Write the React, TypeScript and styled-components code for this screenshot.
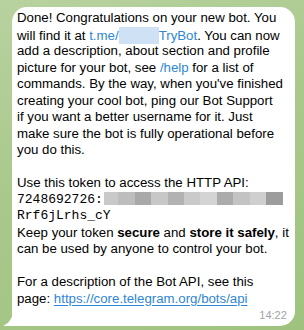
import React from "react";
import styled, { createGlobalStyle } from "styled-components";

const Global = createGlobalStyle`
  html, body { margin: 0; padding: 0; }
  body {
    width: 304px;
    height: 330px;
    overflow: hidden;
    background: linear-gradient(160deg, #b8d29f 0%, #a9c98c 45%, #9fc37f 100%);
  }
`;

const Page = styled.div`
  width: 304px;
  height: 330px;
  box-sizing: border-box;
  padding: 7px 10px 6px 12px;
  display: flex;
  align-items: flex-start;
`;

const Bubble = styled.div`
  position: relative;
  flex: 1;
  background: #ffffff;
  border-radius: 15px 15px 15px 0;
  padding: 3px 6px 4px 5px;
  font-family: "Liberation Sans", Arial, sans-serif;
  font-size: 13.25px;
  line-height: 16.5px;
  color: #000;
`;

const Tail = styled.svg`
  position: absolute;
  left: -9px;
  bottom: 0;
  width: 10px;
  height: 17px;
`;

const Line = styled.div<{ $mono?: boolean }>`
  white-space: nowrap;
  height: 16.5px;
  font-family: ${(p) => (p.$mono ? '"Liberation Mono", "DejaVu Sans Mono", monospace' : "inherit")};
  font-size: ${(p) => (p.$mono ? "13px" : "inherit")};
`;

const Blank = styled.div`
  height: 16.5px;
`;

const Link = styled.span<{ $underline?: boolean }>`
  color: #2d86d6;
  text-decoration: ${(p) => (p.$underline ? "underline" : "none")};
  text-underline-offset: 2px;
`;

const Redact = styled.span<{ $w: number }>`
  display: inline-block;
  width: ${(p) => p.$w}px;
  height: 17px;
  vertical-align: -4px;
  background: #cfe1f4;
`;

const TokenBlur = styled.span`
  display: inline-flex;
  height: 13px;
  vertical-align: -2px;
  margin-left: 1px;
`;

const Seg = styled.span<{ $c: string; $w: number }>`
  display: inline-block;
  width: ${(p) => p.$w}px;
  height: 100%;
  background: ${(p) => p.$c};
`;

const Footer = styled.div`
  display: flex;
  justify-content: flex-end;
  margin-top: 1px;
  padding-right: 2px;
`;

const Time = styled.span`
  font-size: 11px;
  line-height: 14px;
  color: #a0a4a6;
`;

const segs: [string, number][] = [
  ["#c9c9c9", 14],
  ["#bdbdbd", 17],
  ["#a9a9a9", 16],
  ["#c7c7c7", 17],
  ["#b2b2b2", 16],
  ["#cacaca", 16],
  ["#d4d4d4", 17],
  ["#ababab", 16],
  ["#c3c3c3", 17],
  ["#cfcfcf", 16],
  ["#9c9c9c", 17],
];

export default function App() {
  return (
    <>
      <Global />
      <Page>
        <Bubble>
          <Tail viewBox="0 0 10 17">
            <path d="M10 0 C10 8 7 13.5 1.2 16.2 C0.3 16.6 0.6 17 1.5 17 L10 17 Z" fill="#ffffff" />
          </Tail>
          <Line>Done! Congratulations on your new bot. You</Line>
          <Line>
            will find it at <Link>t.me/</Link>
            <Redact $w={40} />
            <Link>TryBot</Link>. You can now
          </Line>
          <Line>add a description, about section and profile</Line>
          <Line>
            picture for your bot, see <Link>/help</Link> for a list of
          </Line>
          <Line>commands. By the way, when you've finished</Line>
          <Line>creating your cool bot, ping our Bot Support</Line>
          <Line>if you want a better username for it. Just</Line>
          <Line>make sure the bot is fully operational before</Line>
          <Line>you do this.</Line>
          <Blank />
          <Line>Use this token to access the HTTP API:</Line>
          <Line $mono>
            7248692726:
            <TokenBlur>
              {segs.map(([c, w], i) => (
                <Seg key={i} $c={c} $w={w} />
              ))}
            </TokenBlur>
          </Line>
          <Line $mono>Rrf6jLrhs_cY</Line>
          <Line>
            Keep your token <b>secure</b> and <b>store it safely</b>, it
          </Line>
          <Line>can be used by anyone to control your bot.</Line>
          <Blank />
          <Line>For a description of the Bot API, see this</Line>
          <Line>
            page: <Link $underline>https://core.telegram.org/bots/api</Link>
          </Line>
          <Footer>
            <Time>14:22</Time>
          </Footer>
        </Bubble>
      </Page>
    </>
  );
}
